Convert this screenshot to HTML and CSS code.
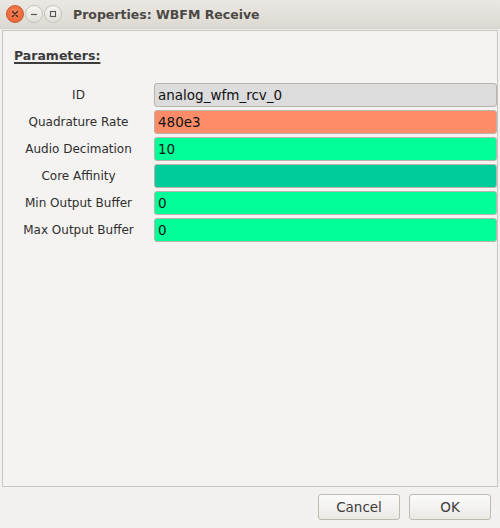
FILE: index.html
```html
<!DOCTYPE html>
<html>
<head>
<meta charset="utf-8">
<link rel="stylesheet" href="styles.css">
</head>
<body>
<div class="window">
  <div class="titlebar">
    <div class="controls">
      <span class="wbtn close"><svg width="8" height="8" viewBox="0 0 8 8"><path d="M1.5 1.5L6.5 6.5M6.5 1.5L1.5 6.5" stroke="#3a2a22" stroke-width="1.3" stroke-linecap="round"/></svg></span>
      <span class="wbtn"><svg width="8" height="8" viewBox="0 0 8 8"><path d="M1 4.5H7" stroke="#5a5752" stroke-width="1.2"/></svg></span>
      <span class="wbtn"><svg width="8" height="8" viewBox="0 0 8 8"><rect x="1.5" y="1.5" width="5" height="5" fill="none" stroke="#5a5752" stroke-width="1.1"/></svg></span>
    </div>
    <div class="title">Properties: WBFM Receive</div>
  </div>
  <div class="body">
    <div class="frame">
      <div class="section">Parameters:</div>
      <div class="params">
        <div class="label">ID</div><div class="field f-id">analog_wfm_rcv_0</div>
        <div class="label">Quadrature Rate</div><div class="field f-real">480e3</div>
        <div class="label">Audio Decimation</div><div class="field f-int">10</div>
        <div class="label">Core Affinity</div><div class="field f-vec"></div>
        <div class="label">Min Output Buffer</div><div class="field f-int">0</div>
        <div class="label">Max Output Buffer</div><div class="field f-int">0</div>
      </div>
    </div>
    <div class="buttons">
      <button class="btn">Cancel</button>
      <button class="btn">OK</button>
    </div>
  </div>
</div>
</body>
</html>
```

FILE: styles.css
```css
html, body {
  margin: 0;
  padding: 0;
}
body {
  width: 500px;
  height: 528px;
  background: #f2f1f0;
  font-family: "DejaVu Sans", sans-serif;
  overflow: hidden;
}
.window {
  width: 500px;
  height: 528px;
  display: flex;
  flex-direction: column;
}
.titlebar {
  height: 29px;
  flex: none;
  display: flex;
  align-items: center;
  background: linear-gradient(#ebe8e3, #dcd8d2);
  border-bottom: 1px solid #d3cfc9;
  box-sizing: border-box;
}
.controls {
  display: flex;
  gap: 1px;
  margin-left: 6px;
  width: 67px;
}
.wbtn {
  width: 18px;
  height: 18px;
  border-radius: 50%;
  box-sizing: border-box;
  border: 1px solid #c6c2bc;
  background: linear-gradient(#f7f6f4, #e2dfda);
  display: flex;
  align-items: center;
  justify-content: center;
}
.wbtn.close {
  border-color: #c85a30;
  background: radial-gradient(circle at 50% 40%, #f6875a, #e8582a);
}
.title {
  font-weight: bold;
  font-size: 12.5px;
  color: #4b4945;
}
.body {
  flex: 1;
  display: flex;
  flex-direction: column;
  padding: 1px 2px 0 2px;
}
.frame {
  height: 457px;
  box-sizing: border-box;
  border: 1px solid #cbc4bc;
  background: #f4f3f1;
  padding: 16px 0 0 0;
}
.section {
  margin-left: 11px;
  font-weight: bold;
  font-size: 12.5px;
  color: #3c3c3c;
  text-decoration: underline;
  text-decoration-thickness: 2px;
  text-underline-offset: 2px;
  line-height: 18px;
}
.params {
  margin-top: 18px;
  display: grid;
  grid-template-columns: 151px 1fr;
  grid-auto-rows: 24px;
  row-gap: 3px;
}
.label {
  text-align: center;
  font-size: 12px;
  color: #2e2e2e;
  line-height: 24px;
  white-space: nowrap;
}
.field {
  box-sizing: border-box;
  border: 1px solid #b9b3ab;
  border-radius: 3px;
  font-size: 13.5px;
  color: #111;
  line-height: 22px;
  padding-left: 3px;
}
.f-id { background: #dcdcdc; }
.f-real { background: #ff8c69; }
.f-int { background: #00ff99; }
.f-vec { background: #00cc99; }
.buttons {
  display: flex;
  justify-content: flex-end;
  gap: 9px;
  padding: 7px 7px 0 0;
}
.btn {
  width: 82px;
  height: 26px;
  box-sizing: border-box;
  border: 1px solid #c0b9b0;
  border-radius: 3px;
  background: linear-gradient(#fbfbfa, #ebe9e6);
  font-family: "DejaVu Sans", sans-serif;
  font-size: 13.5px;
  color: #3c3c3c;
  padding: 0;
}
```
